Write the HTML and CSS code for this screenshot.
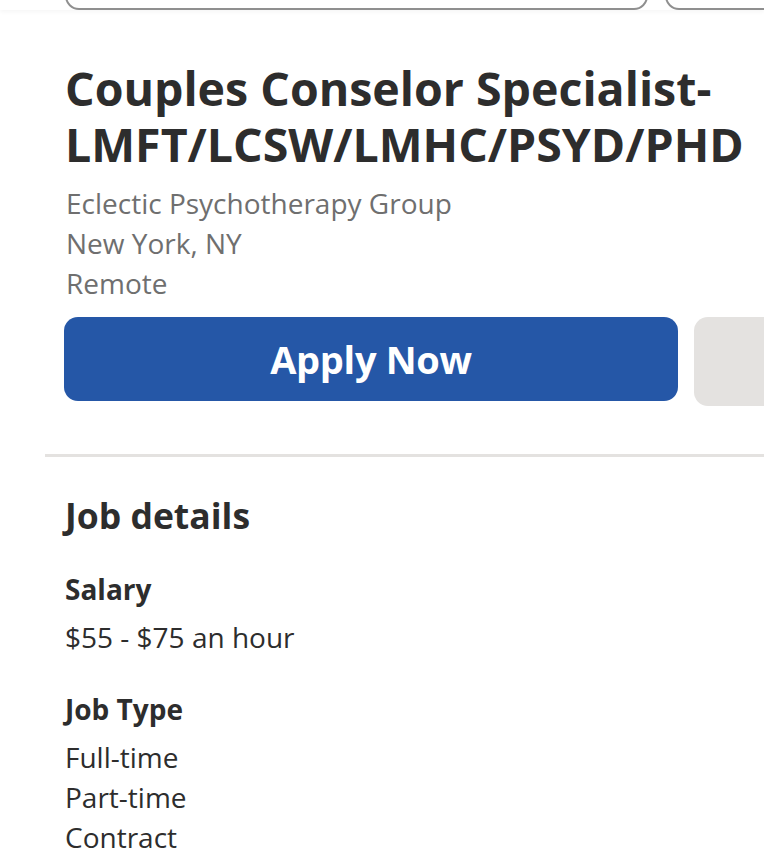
FILE: index.html
```html
<!DOCTYPE html>
<html lang="en">
<head>
<meta charset="utf-8">
<title>Couples Conselor Specialist</title>
<link rel="stylesheet" href="styles.css">
</head>
<body>
<header class="search-bar">
  <div class="search-field search-what"></div>
  <div class="search-field search-where"></div>
</header>
<main class="job">
  <section class="job-header">
    <h1 class="job-title">Couples Conselor Specialist-LMFT/LCSW/LMHC/PSYD/PHD</h1>
    <div class="job-meta">
      <div>Eclectic Psychotherapy Group</div>
      <div>New York, NY</div>
      <div>Remote</div>
    </div>
    <div class="actions">
      <button class="btn-apply">Apply Now</button>
      <button class="btn-save"></button>
    </div>
  </section>
  <hr class="divider">
  <section class="details">
    <h2 class="details-title">Job details</h2>
    <div class="detail salary">
      <h3 class="detail-label">Salary</h3>
      <div class="detail-value">$55 - $75 an hour</div>
    </div>
    <div class="detail jobtype">
      <h3 class="detail-label">Job Type</h3>
      <div class="detail-value">Full-time</div>
      <div class="detail-value">Part-time</div>
      <div class="detail-value">Contract</div>
    </div>
  </section>
</main>
</body>
</html>
```
FILE: styles.css
```css
html, body {
  margin: 0;
  padding: 0;
  background: #ffffff;
  overflow: hidden;
}
body {
  font-family: "Open Sans", "Noto Sans", sans-serif;
  color: #2d2d2d;
  width: 764px;
}
.search-bar {
  height: 10px;
  display: flex;
  gap: 17px;
  padding-left: 65px;
  overflow: hidden;
  box-shadow: 0 2px 4px rgba(0,0,0,0.04);
  position: relative;
}
.search-field {
  flex: none;
  height: 50px;
  margin-top: -40px;
  border: 2px solid #8f8f8f;
  border-radius: 14px;
  box-sizing: border-box;
}
.search-what { width: 583px; }
.search-where { width: 200px; }
.job-header {
  padding: 50px 0 0 64px;
}
.job-title {
  margin: 0 0 0 1px;
  font-size: 46.5px;
  line-height: 56px;
  font-weight: 700;
  color: #2d2d2d;
  width: 690px;
}
.job-meta {
  margin: 11px 0 0 2px;
  font-size: 28px;
  line-height: 40px;
  color: #6f6f6f;
}
.actions {
  display: flex;
  gap: 16px;
  margin-top: 14px;
  align-items: flex-start;
  overflow: hidden;
  height: 89px;
}
.btn-apply {
  flex: none;
  width: 614px;
  height: 84px;
  border: 0;
  border-radius: 14px;
  background: #2557a7;
  color: #ffffff;
  font-family: "Open Sans", "Noto Sans", sans-serif;
  font-weight: 700;
  font-size: 38px;
  letter-spacing: -0.3px;
  padding: 0;
}
.btn-save {
  flex: none;
  width: 120px;
  height: 89px;
  border: 0;
  border-radius: 14px;
  background: #e4e2e0;
  padding: 0;
}
.divider {
  margin: 48px 0 0 45px;
  border: 0;
  height: 3px;
  background: #e4e2e0;
}
.details {
  padding: 34px 0 0 65px;
}
.details-title {
  margin: 0;
  font-size: 35.5px;
  line-height: 48px;
  font-weight: 700;
}
.detail-label {
  margin: 0;
  font-size: 28px;
  line-height: 40px;
  font-weight: 700;
}
.detail-value {
  font-size: 28px;
  line-height: 40px;
}
.salary {
  margin-top: 30px;
}
.salary .detail-label {
  margin-bottom: 8px;
}
.jobtype {
  margin-top: 32px;
}
.jobtype .detail-label {
  margin-bottom: 8px;
}
```
